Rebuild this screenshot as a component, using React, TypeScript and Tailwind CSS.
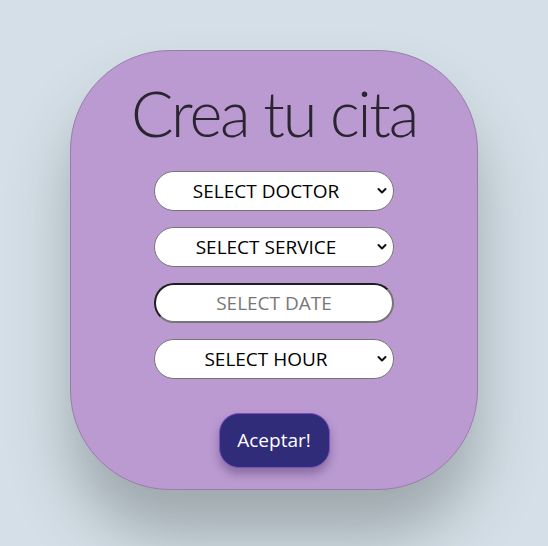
import React from "react"

const Chevron: React.FC = () => (
  <svg
    className="pointer-events-none absolute right-[7px] top-1/2 -translate-y-1/2"
    width="10"
    height="7"
    viewBox="0 0 10 7"
    fill="none"
  >
    <path d="M1.5 1.5 L5 5 L8.5 1.5" stroke="#111" strokeWidth="2" strokeLinecap="round" strokeLinejoin="round" />
  </svg>
)

const Picker: React.FC<{ label: string }> = ({ label }) => (
  <div className="relative w-[240px] h-[40px]">
    <select
      defaultValue=""
      className="appearance-none w-full h-full rounded-full bg-white border border-[#767676] text-center text-[19px] text-black pr-4 outline-none"
      style={{ textAlignLast: "center" }}
    >
      <option value="" disabled>{label}</option>
    </select>
    <Chevron />
  </div>
)

export default function App() {
  return (
    <div className="min-h-[546px] w-full bg-[#d4dfe7] flex justify-center pt-[50px] font-['Open_Sans',sans-serif]">
      <div className="w-[408px] h-[440px] rounded-[100px] bg-[#bb9ad2] border border-[#9a7ca8] shadow-[0_45px_60px_rgba(60,70,70,0.35)] flex flex-col items-center">
        <h1 className="mt-[30px] text-[63px] font-light leading-none tracking-[-2.2px] text-[#2a2530] font-['Lato',sans-serif]">Crea tu cita</h1>
        <div className="mt-[27px] flex flex-col gap-[16px] items-center">
          <Picker label="SELECT DOCTOR" />
          <Picker label="SELECT SERVICE" />
          <input
            type="text"
            placeholder="SELECT DATE"
            className="w-[240px] h-[40px] rounded-full bg-white border-2 border-t-[#1e1e1e] border-l-[#1e1e1e] border-r-[#767676] border-b-[#767676] text-center text-[19px] placeholder:text-[#777] outline-none"
          />
          <Picker label="SELECT HOUR" />
        </div>
        <button className="mt-[34px] w-[111px] h-[55px] rounded-[20px] bg-[#302c7a] border border-[#7b4fc0] text-white text-[19px] shadow-[0_6px_10px_rgba(40,30,70,0.35)]">
          Aceptar!
        </button>
      </div>
    </div>
  )
}
